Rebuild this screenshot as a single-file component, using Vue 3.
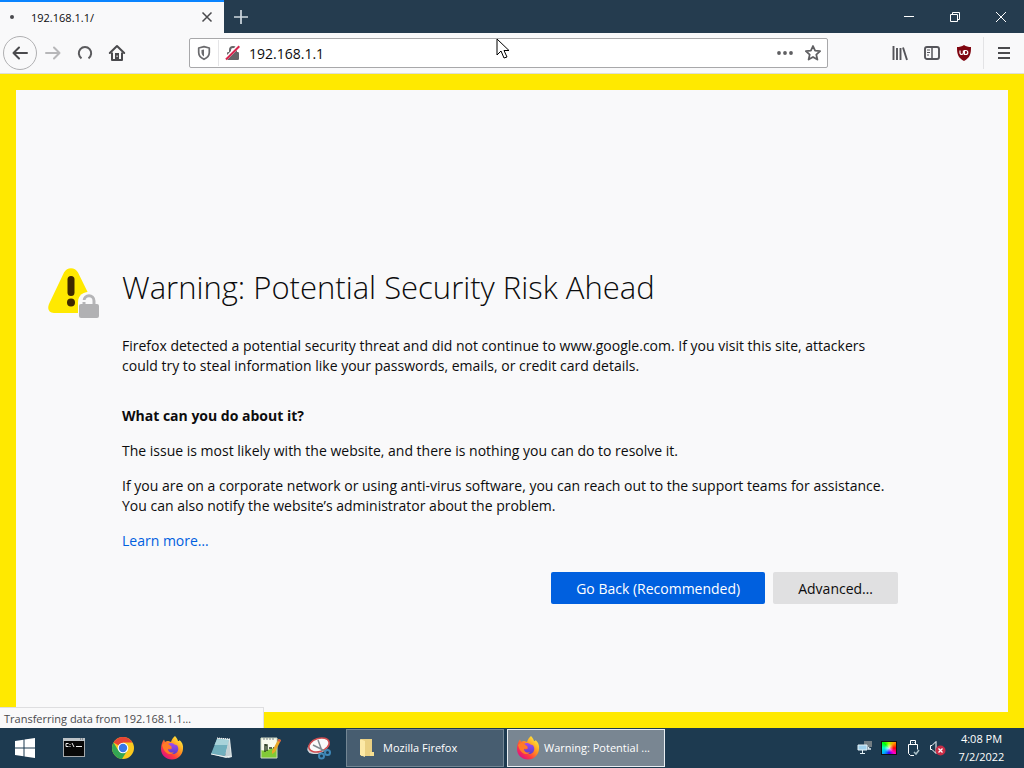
<script setup>
import { ref } from 'vue'

const address = ref('192.168.1.1')
</script>

<template>
  <div class="desktop">
    <header class="titlebar">
      <div class="tab">
        <span class="throbber"></span>
        <span class="tab-title">192.168.1.1/</span>
        <button class="plain tab-close" aria-label="Close tab">
          <svg width="12" height="12" viewBox="0 0 12 12" fill="none" stroke="#4a4a4d" stroke-width="1.500"><path d="M1.500 1.500l9 9M10.500 1.500l-9 9" /></svg>
        </button>
      </div>
      <button class="plain new-tab" aria-label="New tab">
        <svg width="16" height="16" viewBox="0 0 16 16" fill="none" stroke="#d0d9e0" stroke-width="1.700"><path d="M8 1v14M1 8h14" /></svg>
      </button>
      <div class="window-controls">
        <button class="plain" aria-label="Minimize">
          <svg width="12" height="12" viewBox="0 0 12 12" fill="none" stroke="#fff"><path d="M1 5.500h10" /></svg>
        </button>
        <button class="plain" aria-label="Restore">
          <svg width="12" height="12" viewBox="0 0 12 12" fill="none" stroke="#fff"><path d="M1.500 3.500h7v7h-7zM3.500 3.500v-2h7v7h-2" /></svg>
        </button>
        <button class="plain" aria-label="Close">
          <svg width="12" height="12" viewBox="0 0 12 12" fill="none" stroke="#fff"><path d="M1 1l10 10M11 1L1 11" /></svg>
        </button>
      </div>
    </header>

    <nav class="toolbar">
      <div class="nav-buttons">
        <button class="plain back" aria-label="Back">
          <svg width="18" height="18" viewBox="0 0 18 18" fill="none" stroke="#4a4a4d" stroke-width="2" stroke-linecap="round" stroke-linejoin="round"><path d="M16 9H2.500M8 3.500L2.500 9 8 14.500" /></svg>
        </button>
        <button class="plain nav" aria-label="Forward" disabled>
          <svg width="18" height="18" viewBox="0 0 18 18" fill="none" stroke="#b7b7b9" stroke-width="2" stroke-linecap="round" stroke-linejoin="round"><path d="M2 9h13.500M10 3.500L15.500 9 10 14.500" /></svg>
        </button>
        <button class="plain nav" aria-label="Reload">
          <svg width="16" height="16" viewBox="0 0 16 16" fill="none" stroke="#5a5a5d" stroke-width="2"><path d="M4.500 13.300A6.200 6.200 0 1 1 11.500 13.300" /></svg>
        </button>
        <button class="plain nav" aria-label="Home">
          <svg width="18" height="18" viewBox="0 0 18 18"><path d="M1.800 9L9 2l7.200 7" fill="none" stroke="#4a4a4d" stroke-width="2" stroke-linecap="round" stroke-linejoin="round" /><path d="M4 8.500V16h10V8.500" fill="none" stroke="#4a4a4d" stroke-width="2" stroke-linejoin="round" /><path d="M7 9h4v7H7z" fill="#4a4a4d" /><path d="M8.600 11.500h1V13h-1z" fill="#fff" /></svg>
        </button>
      </div>

      <div class="urlbar">
        <button class="plain shield" aria-label="Tracking protection">
          <svg width="14" height="16" viewBox="0 0 14 16"><path d="M7 1.700L12.300 3v4.500c0 3-2 5.300-5.300 6.800C3.700 12.800 1.700 10.500 1.700 7.500V3z" fill="none" stroke="#6b6b6e" stroke-width="1.700" stroke-linejoin="round" /><path d="M7 4.500v7C5.300 10.600 4.500 9.300 4.500 7.300V5z" fill="#6b6b6e" /></svg>
        </button>
        <button class="plain lock" aria-label="Connection is not secure">
          <svg width="16" height="16" viewBox="0 0 16 16"><path d="M5 8V5a3 3 0 0 1 6 0v3" fill="none" stroke="#646467" stroke-width="2" /><rect x="2" y="7" width="12" height="8" rx="1.200" fill="#646467" /><path d="M1 13.600L13.600 1" stroke="#fff" stroke-width="3.600" /><path d="M1 14.500L14.300 1.200" stroke="#d7264f" stroke-width="2" /></svg>
        </button>
        <input v-model="address" class="address" type="text" aria-label="Address" />
        <button class="plain action" aria-label="Page actions">
          <svg width="16" height="16" viewBox="0 0 16 16" fill="#5f5f62"><circle cx="2" cy="8" r="1.900" /><circle cx="8" cy="8" r="1.900" /><circle cx="14" cy="8" r="1.900" /></svg>
        </button>
        <button class="plain action" aria-label="Bookmark this page">
          <svg width="16" height="16" viewBox="0 0 16 16" fill="none" stroke="#5f5f62" stroke-width="1.800" stroke-linejoin="round"><path d="M8 1l2.100 4.700 5 .5-3.800 3.400 1.100 5L8 12l-4.400 2.600 1.100-5L.9 6.200l5-.5z" /></svg>
        </button>
      </div>

      <div class="tools">
        <button class="plain tool" aria-label="Library">
          <svg width="16" height="16" viewBox="0 0 16 16" fill="none" stroke="#55555a" stroke-width="1.900"><path d="M1.500 1v14M5 3v12M8.500 3v12M11 2.500L15 15" /></svg>
        </button>
        <button class="plain tool" aria-label="Sidebars">
          <svg width="16" height="16" viewBox="0 0 16 16" fill="none" stroke="#55555a"><rect x="1" y="2" width="14" height="12" rx="2" stroke-width="1.900" /><path d="M8 2v12" stroke-width="1.500" /><path d="M3 5h3M3 7.500h3M3 10h2" /></svg>
        </button>
        <button class="plain tool" aria-label="uBlock Origin">
          <svg width="16" height="16" viewBox="0 0 16 16"><path d="M8 0c2 1.500 4.500 2 7 2 0 7-.8 10.500-7 14C1.800 12.500 1 9 1 2c2.500 0 5-.5 7-2z" fill="#800610" /><path d="M4 5.500v2.300a1.700 1.700 0 0 0 3.400 0V5.500" fill="none" stroke="#fff" stroke-width="1.200" /><path d="M8.500 5.500h1.300a2 2 0 0 1 0 4H8.500z" fill="none" stroke="#fff" stroke-width="1.200" /></svg>
        </button>
        <button class="plain tool menu" aria-label="Open menu">
          <svg width="14" height="14" viewBox="0 0 14 14" fill="none" stroke="#4a4a4d" stroke-width="1.900"><path d="M1 2h12M1 7h12M1 12h12" /></svg>
        </button>
      </div>
    </nav>

    <main class="page">
      <article class="error">
        <svg class="warning" width="52" height="52" viewBox="0 0 52 52" aria-hidden="true">
          <path d="M16 5.500C19-.2 27-.2 30 5.500L45 36c3 6 0 10-5 10H6c-5 0-7-4-5-9z" fill="#ffe900" />
          <rect x="19.500" y="9" width="7" height="20" rx="3.500" fill="#3e2800" />
          <circle cx="23" cy="35.500" r="4" fill="#3e2800" />
          <path d="M30 52V35c0-13 22-14 22 0v17z" fill="#f9f9fa" />
          <path d="M36 38v-4c0-7 10-7 10 0v4" fill="none" stroke="#b5b5b7" stroke-width="3" />
          <path d="M33 33h5v2h-5z" fill="#f9f9fa" />
          <rect x="31" y="37" width="20" height="14" rx="2" fill="#b1b1b3" />
        </svg>
        <div class="text">
          <h1>Warning: Potential Security Risk Ahead</h1>
          <p class="intro">Firefox detected a potential security threat and did not continue to www.google.com. If you visit this site, attackers<br />could try to steal information like your passwords, emails, or credit card details.</p>
          <h2>What can you do about it?</h2>
          <p>The issue is most likely with the website, and there is nothing you can do to resolve it.</p>
          <p>If you are on a corporate network or using anti-virus software, you can reach out to the support teams for assistance.<br />You can also notify the website’s administrator about the problem.</p>
          <p><a href="#">Learn more…</a></p>
          <div class="choices">
            <button class="choice primary">Go Back (Recommended)</button>
            <button class="choice">Advanced…</button>
          </div>
        </div>
      </article>
      <div class="status" role="status">Transferring data from 192.168.1.1…</div>
    </main>

    <footer class="taskbar">
      <button class="plain launcher" aria-label="Start">
        <svg width="22" height="22" viewBox="0 0 22 22" fill="#fff"><path d="M1 4l8.500-1.300v7.800H1zM10.500 2.500L21 1v9.500H10.500zM1 11.500h8.500v7.800L1 18zM10.500 11.500H21V21l-10.500-1.500z" /></svg>
      </button>
      <button class="plain launcher" aria-label="Command Prompt">
        <svg width="24" height="22" viewBox="0 0 24 22"><rect x="1.500" y="1.500" width="21" height="18" fill="#080808" stroke="#a5a9ac" /><path d="M1 1h22v3H1z" fill="#bdc3c7" /><path d="M18 2h1M20 2h1" stroke="#56616b" /><path d="M6.500 6.500H4v3h2.500M8 7v1M8 9v1M10 6l2 4M14 9.500h6" fill="none" stroke="#eee" /></svg>
      </button>
      <button class="plain launcher" aria-label="Google Chrome">
        <svg width="24" height="24" viewBox="0 0 24 24"><circle cx="12" cy="12" r="11" fill="#fbc91e" /><path d="M12 12L2.500 6.500A11 11 0 0 1 21.500 6.500H12z" fill="#e84435" /><path d="M2.500 6.500A11 11 0 0 0 11 23l5.300-8.500L12 12l-4.700 2.500z" fill="#33a653" /><circle cx="12" cy="12" r="5.300" fill="#fff" /><circle cx="12" cy="12" r="4.200" fill="#3978e7" /></svg>
      </button>
      <button class="plain launcher" aria-label="Firefox">
        <svg width="24" height="24" viewBox="0 0 24 24">
          <defs>
            <linearGradient id="flame" x1="0.900" y1="0.100" x2="0.200" y2="0.900"><stop offset="0" stop-color="#fff13f" /><stop offset="0.400" stop-color="#ff9a1f" /><stop offset="0.750" stop-color="#ff3b3f" /><stop offset="1" stop-color="#e1157c" /></linearGradient>
            <linearGradient id="globe" x1="0" y1="0" x2="0" y2="1"><stop offset="0" stop-color="#a04af0" /><stop offset="1" stop-color="#5a3fc8" /></linearGradient>
          </defs>
          <path d="M15 0c2 2 2.500 3.500 3 5 1 .3 1.500-.2 1.500-1C22 6 23.500 9 23 13c-.5 6-5 10.500-11 10.500S1 19 1 13C1 9 2 6 4 3.500L5 6c1-.7 2-1 3.500-1L11 6c1-3 2-4.500 4-6z" fill="url(#flame)" />
          <path d="M8 8c2-1.500 5-1 6.500.5 3 0 4.500 3 3.500 6s-4 4-6.500 3.500S7 15 8 13c2 1 3 0 4-.7-1.500-1-4-.8-4-4.300z" fill="url(#globe)" />
          <path d="M2 9c2-3 5-2.500 7-.5L12 11c-1 1.500-3 1.500-4 2 0 3 3 4 6 3.500-4 3.500-10 1-12-7.500z" fill="#ff7b28" />
        </svg>
      </button>
      <button class="plain launcher" aria-label="Notepad">
        <svg width="24" height="24" viewBox="0 0 24 24"><path d="M8 2l13 1 2 18-4 1z" fill="#e2e9e9" /><path d="M8 3l12 1-4 16-14-2z" fill="#70afbd" /><path d="M8 3l12 1-1 5L5.500 9z" fill="#a8d3da" /><path d="M2 18l14 2 4-16 2 17-5 1z" fill="#c4d0d3" /><path d="M8 2l13 1" stroke="#fff" stroke-dasharray="1 1" /><path d="M2 18l15 3 5-1" fill="none" stroke="#edf3f3" /></svg>
      </button>
      <button class="plain launcher" aria-label="Notepad++">
        <svg width="24" height="24" viewBox="0 0 24 24"><path d="M3 2h16v20H3z" fill="#f8faed" /><path d="M3 14c6 2 10-2 16-3v11H3z" fill="#82c936" /><path d="M3 2h16v20H3z" fill="none" stroke="#d1dbc4" /><path d="M6 1v3M9 1v3M12 1v3M15 1v3" stroke="#78858a" /><path d="M7 8v8M7 9h2v6M11 12h3M15 12h2" fill="none" stroke="#26371d" stroke-width="1.400" /><path d="M14 15l6.500-12 2.500 1-6 12-3 2z" fill="#e9a829" /><path d="M20.500 3l2.500 1-.8 2-2.500-1z" fill="#dc5a43" /></svg>
      </button>
      <button class="plain launcher" aria-label="Snipping Tool">
        <svg width="26" height="24" viewBox="0 0 26 24"><ellipse cx="12" cy="11" rx="11" ry="6.500" transform="rotate(-18 12 11)" fill="#d3d6da" /><ellipse cx="13" cy="9" rx="10.500" ry="6.500" transform="rotate(-18 13 9)" fill="#fafafa" stroke="#cf4c50" stroke-width="1.600" /><path d="M12 4l4 11M7 9l12 6" stroke="#81898f" stroke-width="1.500" /><circle cx="15.500" cy="20" r="2.500" fill="none" stroke="#3f88b8" stroke-width="2" /><circle cx="21.500" cy="16.500" r="2.500" fill="none" stroke="#3f88b8" stroke-width="2" /></svg>
      </button>

      <button class="task">
        <svg width="20" height="22" viewBox="0 0 20 22" aria-hidden="true"><path d="M4 2h11v14l2 2v1H4z" fill="#ead083" /><path d="M3 2l5 2v16l-5-2z" fill="#fce9a7" /><path d="M15 15h2v4h-4v-4z" fill="#f7df91" /></svg>
        <span>Mozilla Firefox</span>
      </button>
      <button class="task active">
        <svg width="24" height="24" viewBox="0 0 24 24" aria-hidden="true">
          <path d="M15 0c2 2 2.500 3.500 3 5 1 .3 1.500-.2 1.500-1C22 6 23.500 9 23 13c-.5 6-5 10.500-11 10.500S1 19 1 13C1 9 2 6 4 3.500L5 6c1-.7 2-1 3.500-1L11 6c1-3 2-4.500 4-6z" fill="url(#flame)" />
          <path d="M8 8c2-1.500 5-1 6.500.5 3 0 4.500 3 3.500 6s-4 4-6.500 3.500S7 15 8 13c2 1 3 0 4-.7-1.500-1-4-.8-4-4.300z" fill="url(#globe)" />
          <path d="M2 9c2-3 5-2.500 7-.5L12 11c-1 1.500-3 1.500-4 2 0 3 3 4 6 3.500-4 3.500-10 1-12-7.500z" fill="#ff7b28" />
        </svg>
        <span>Warning: Potential ...</span>
      </button>

      <div class="tray">
        <button class="plain tray-icon" aria-label="Network">
          <svg width="16" height="16" viewBox="0 0 16 16"><path d="M7 1h8v6H7z" fill="#737d83" /><path d="M1 5h9v5H1z" fill="#9fd0ec" stroke="#e3f0f6" /><path d="M5.500 10v3M3 13.500h5" stroke="#e3f0f6" /><path d="M11.500 7v2H14" fill="none" stroke="#dce8ee" stroke-width="1.500" /></svg>
        </button>
        <button class="plain tray-icon" aria-label="Display settings"><span class="spectrum"></span></button>
        <button class="plain tray-icon" aria-label="Safely remove hardware">
          <svg width="16" height="18" viewBox="0 0 16 18" fill="none" stroke="#fff"><path d="M5.500 5.500v-4h5v4M3.500 5.500h9v5M3.500 5.500v9l2 2H9M7 3.500h.5M9 3.500h.5" /><path d="M9 13l2 2 3-4" stroke="#aac0c8" stroke-width="1.500" /></svg>
        </button>
        <button class="plain tray-icon" aria-label="Volume muted">
          <svg width="18" height="16" viewBox="0 0 18 16" fill="none"><path d="M2.500 5.500H4l4-4v12l-4-4H2.500z" stroke="#fff" /><circle cx="12.500" cy="10.500" r="5" fill="#c82c46" /><path d="M10.500 8.500l4 4M14.500 8.500l-4 4" stroke="#fff" stroke-width="1.300" /></svg>
        </button>
        <time class="clock" datetime="2022-07-02T16:08"><span>4:08 PM</span><span>7/2/2022</span></time>
      </div>
    </footer>

    <svg class="cursor" width="14" height="22" viewBox="0 0 14 22" aria-hidden="true"><path d="M1 1v16l4-4 3 7 3-1-3-6.500h5z" fill="#fff" stroke="#000" /></svg>
  </div>
</template>

<style>
body {
  margin: 0;
}
</style>

<style scoped>
.desktop {
  position: relative;
  display: flex;
  flex-direction: column;
  min-height: 100vh;
  font-family: "Open Sans", "Noto Sans", sans-serif;
  color: #0c0c0d;
}
.desktop * {
  box-sizing: border-box;
}
button,
input {
  font-family: inherit;
}
.plain {
  display: flex;
  align-items: center;
  justify-content: center;
  padding: 0;
  border: 0;
  background: none;
}
svg {
  flex: none;
}
.titlebar {
  display: flex;
  height: 33px;
  background: #253c4f;
}
.tab {
  display: flex;
  align-items: center;
  width: 224px;
  padding: 0 9px 1px 10px;
  border-top: 2px solid #0a84ff;
  background: #f9f9fa;
  font-size: 11px;
}
.throbber {
  width: 4px;
  height: 4px;
  margin-right: 17px;
  border-radius: 50%;
  background: #4a4a4d;
}
.tab-title {
  flex: 1;
}
.tab-close {
  width: 16px;
  height: 24px;
}
.new-tab {
  width: 34px;
}
.window-controls {
  display: flex;
  margin-left: auto;
}
.window-controls .plain {
  width: 46px;
}
.toolbar {
  display: flex;
  align-items: center;
  height: 41px;
  border-bottom: 1px solid #dedfd6;
  background: #f9f9fa;
}
.nav-buttons {
  display: flex;
  align-items: center;
  width: 189px;
  padding-left: 3px;
}
.back {
  width: 34px;
  height: 34px;
  border: 1px solid #b0b0b2;
  border-radius: 50%;
}
.nav {
  width: 32px;
  height: 32px;
}
.urlbar {
  display: flex;
  align-items: center;
  flex: 1;
  height: 30px;
  border: 1px solid #a8a8aa;
  border-radius: 2px;
  background: #fff;
}
.shield {
  width: 29px;
  height: 26px;
  border-right: 1px solid #e5e5e7;
}
.lock {
  width: 28px;
}
.address {
  flex: 1;
  min-width: 0;
  padding: 0 2px;
  border: 0;
  outline: 0;
  background: none;
  color: #0c0c0d;
  font-size: 14px;
}
.action {
  width: 28px;
}
.tools {
  display: flex;
  width: 196px;
  padding-left: 56px;
}
.tool {
  width: 32px;
  height: 32px;
}
.menu {
  flex: 1;
  margin-left: 3px;
  border-left: 1px solid #e3e3e5;
}
.page {
  position: relative;
  display: flex;
  flex: 1;
  align-items: center;
  border: 16px solid #ffe900;
  padding: 68px 32px 0;
  background: #f9f9fa;
}
.error {
  display: flex;
  gap: 22px;
  width: 100%;
  max-width: 850px;
}
.warning {
  margin-top: 1px;
}
.text {
  flex: 1;
  font-size: 14px;
  line-height: 20px;
}
h1 {
  margin: 0 0 28px;
  font-size: 31px;
  font-weight: 300;
  line-height: 42px;
}
h2 {
  margin: 0 0 15px;
  font-size: 14px;
  font-weight: 700;
  line-height: 20px;
}
p {
  margin: 0 0 15px;
}
.intro {
  margin-bottom: 30px;
}
a {
  color: #0060df;
  text-decoration: none;
}
.choices {
  display: flex;
  justify-content: flex-end;
  gap: 8px;
  padding-top: 6px;
}
.choice {
  height: 32px;
  padding: 0 25px;
  border: 0;
  border-radius: 2px;
  background: #e0e0e1;
  color: #0c0c0d;
  font-size: 14px;
}
.primary {
  background: #0060df;
  color: #fff;
}
.status {
  position: absolute;
  bottom: -16px;
  left: -16px;
  width: 264px;
  height: 21px;
  padding: 0 4px;
  border-top: 1px solid #dedee0;
  border-right: 1px solid #dedee0;
  background: #f9f9fa;
  color: #4a4a4d;
  font-size: 11px;
  line-height: 21px;
}
.taskbar {
  display: flex;
  align-items: center;
  height: 40px;
  background: #1d3a50;
}
.launcher {
  width: 49px;
  height: 40px;
}
.task {
  display: flex;
  align-items: center;
  width: 158px;
  height: 38px;
  margin-left: 3px;
  padding: 0 8px;
  border: 1px solid #738694;
  background: #475d70;
  color: #fff;
  font-size: 11px;
  line-height: 14px;
  white-space: nowrap;
}
.task svg {
  width: 24px;
  margin-right: 4px;
}
.active {
  border-color: #e9eef2;
  background: #798692;
}
.tray {
  display: flex;
  align-items: center;
  margin-left: auto;
}
.tray-icon {
  width: 24px;
  height: 32px;
}
.spectrum {
  width: 16px;
  height: 14px;
  border: 1px solid #111;
  background: radial-gradient(circle, rgba(255, 255, 255, 0.8), transparent 50%), conic-gradient(#aaff00, #ff9900, #ff0000, #ff00cc, #3300ff, #00aaff, #00ffcc, #00ff00, #aaff00);
}
.clock {
  display: flex;
  flex-direction: column;
  width: 75px;
  padding-right: 10px;
  color: #fff;
  font-size: 11px;
  line-height: 18px;
  text-align: center;
}
.cursor {
  position: absolute;
  top: 38px;
  left: 496px;
}
</style>
